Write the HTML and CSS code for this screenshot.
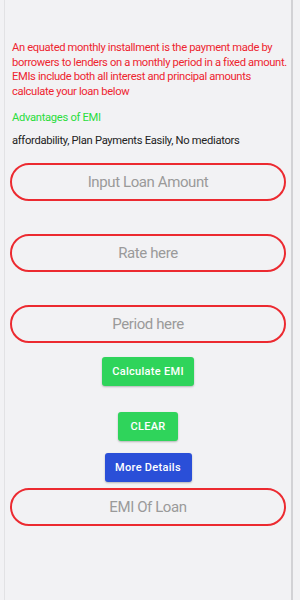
FILE: index.html
```html
<!DOCTYPE html>
<html lang="en">
<head>
    <meta charset="UTF-8">
    <meta name="viewport" content="width=device-width, initial-scale=1.0">
    <title>EMI Calculator</title>
    <link rel="stylesheet" href="styles.css">
</head>
<body>
    <div class="screen">
        <p class="intro">An equated monthly installment is the payment made by borrowers to lenders on a monthly period in a fixed amount. EMIs include both all interest and principal amounts calculate your loan below</p>
        <p class="adv-title">Advantages of EMI</p>
        <p class="adv-list">affordability, Plan Payments Easily, No mediators</p>

        <input class="field first" type="text" placeholder="Input Loan Amount">
        <input class="field" type="text" placeholder="Rate here">
        <input class="field" type="text" placeholder="Period here">

        <div class="actions">
            <div class="button green calc">Calculate EMI</div>
            <div class="button green clear">CLEAR</div>
            <div class="button blue more">More Details</div>
        </div>

        <input class="field result" type="text" placeholder="EMI Of Loan">
    </div>
</body>
</html>
```

FILE: styles.css
```css
body {
    margin: 0;
    padding: 0;
    background: #f2f2f4;
    font-family: Roboto, "Liberation Sans", sans-serif;
}
.screen {
    margin-left: 4px;
    width: 289px;
    height: 600px;
    border-left: 1px solid #e2e2e4;
    border-right: 2px solid #d2d2d5;
    padding: 0 5px;
    box-sizing: border-box;
    overflow: hidden;
}
.intro {
    margin: 41px -3px 0 2px;
    color: #ee2530;
    font-size: 11.2px;
    letter-spacing: -0.35px;
    line-height: 14.6px;
}
.adv-title {
    margin: 12px 0 0 2px;
    color: #2add3c;
    font-size: 11.2px;
    letter-spacing: -0.3px;
    line-height: 14px;
}
.adv-list {
    margin: 9px 0 0 2px;
    color: #222;
    font-size: 11.2px;
    letter-spacing: -0.3px;
    line-height: 14px;
}
.field {
    display: block;
    width: 100%;
    height: 38px;
    box-sizing: border-box;
    margin-top: 33px;
    border: 2px solid #ec2a30;
    border-radius: 19px;
    background: transparent;
    text-align: center;
    font-family: Roboto, sans-serif;
    font-size: 15px;
    letter-spacing: -0.4px;
    color: #333;
    outline: none;
}
.field::placeholder {
    color: #9a9a9a;
}
.field.first {
    margin-top: 15px;
}
.actions {
    display: flex;
    flex-direction: column;
    align-items: center;
    margin-top: 14px;
}
.button {
    color: white;
    font-size: 11px;
    font-weight: 500;
    letter-spacing: 0.3px;
    text-align: center;
    height: 29px;
    line-height: 29px;
    border-radius: 3px;
    box-shadow: 0 1px 2px rgba(0, 0, 0, 0.25);
}
.green {
    background: #2fd45b;
}
.blue {
    background: #2a4fd8;
}
.calc {
    width: 92px;
}
.clear {
    width: 60px;
    margin-top: 26px;
}
.more {
    width: 87px;
    margin-top: 12px;
}
.field.result {
    margin-top: 6px;
}
```
